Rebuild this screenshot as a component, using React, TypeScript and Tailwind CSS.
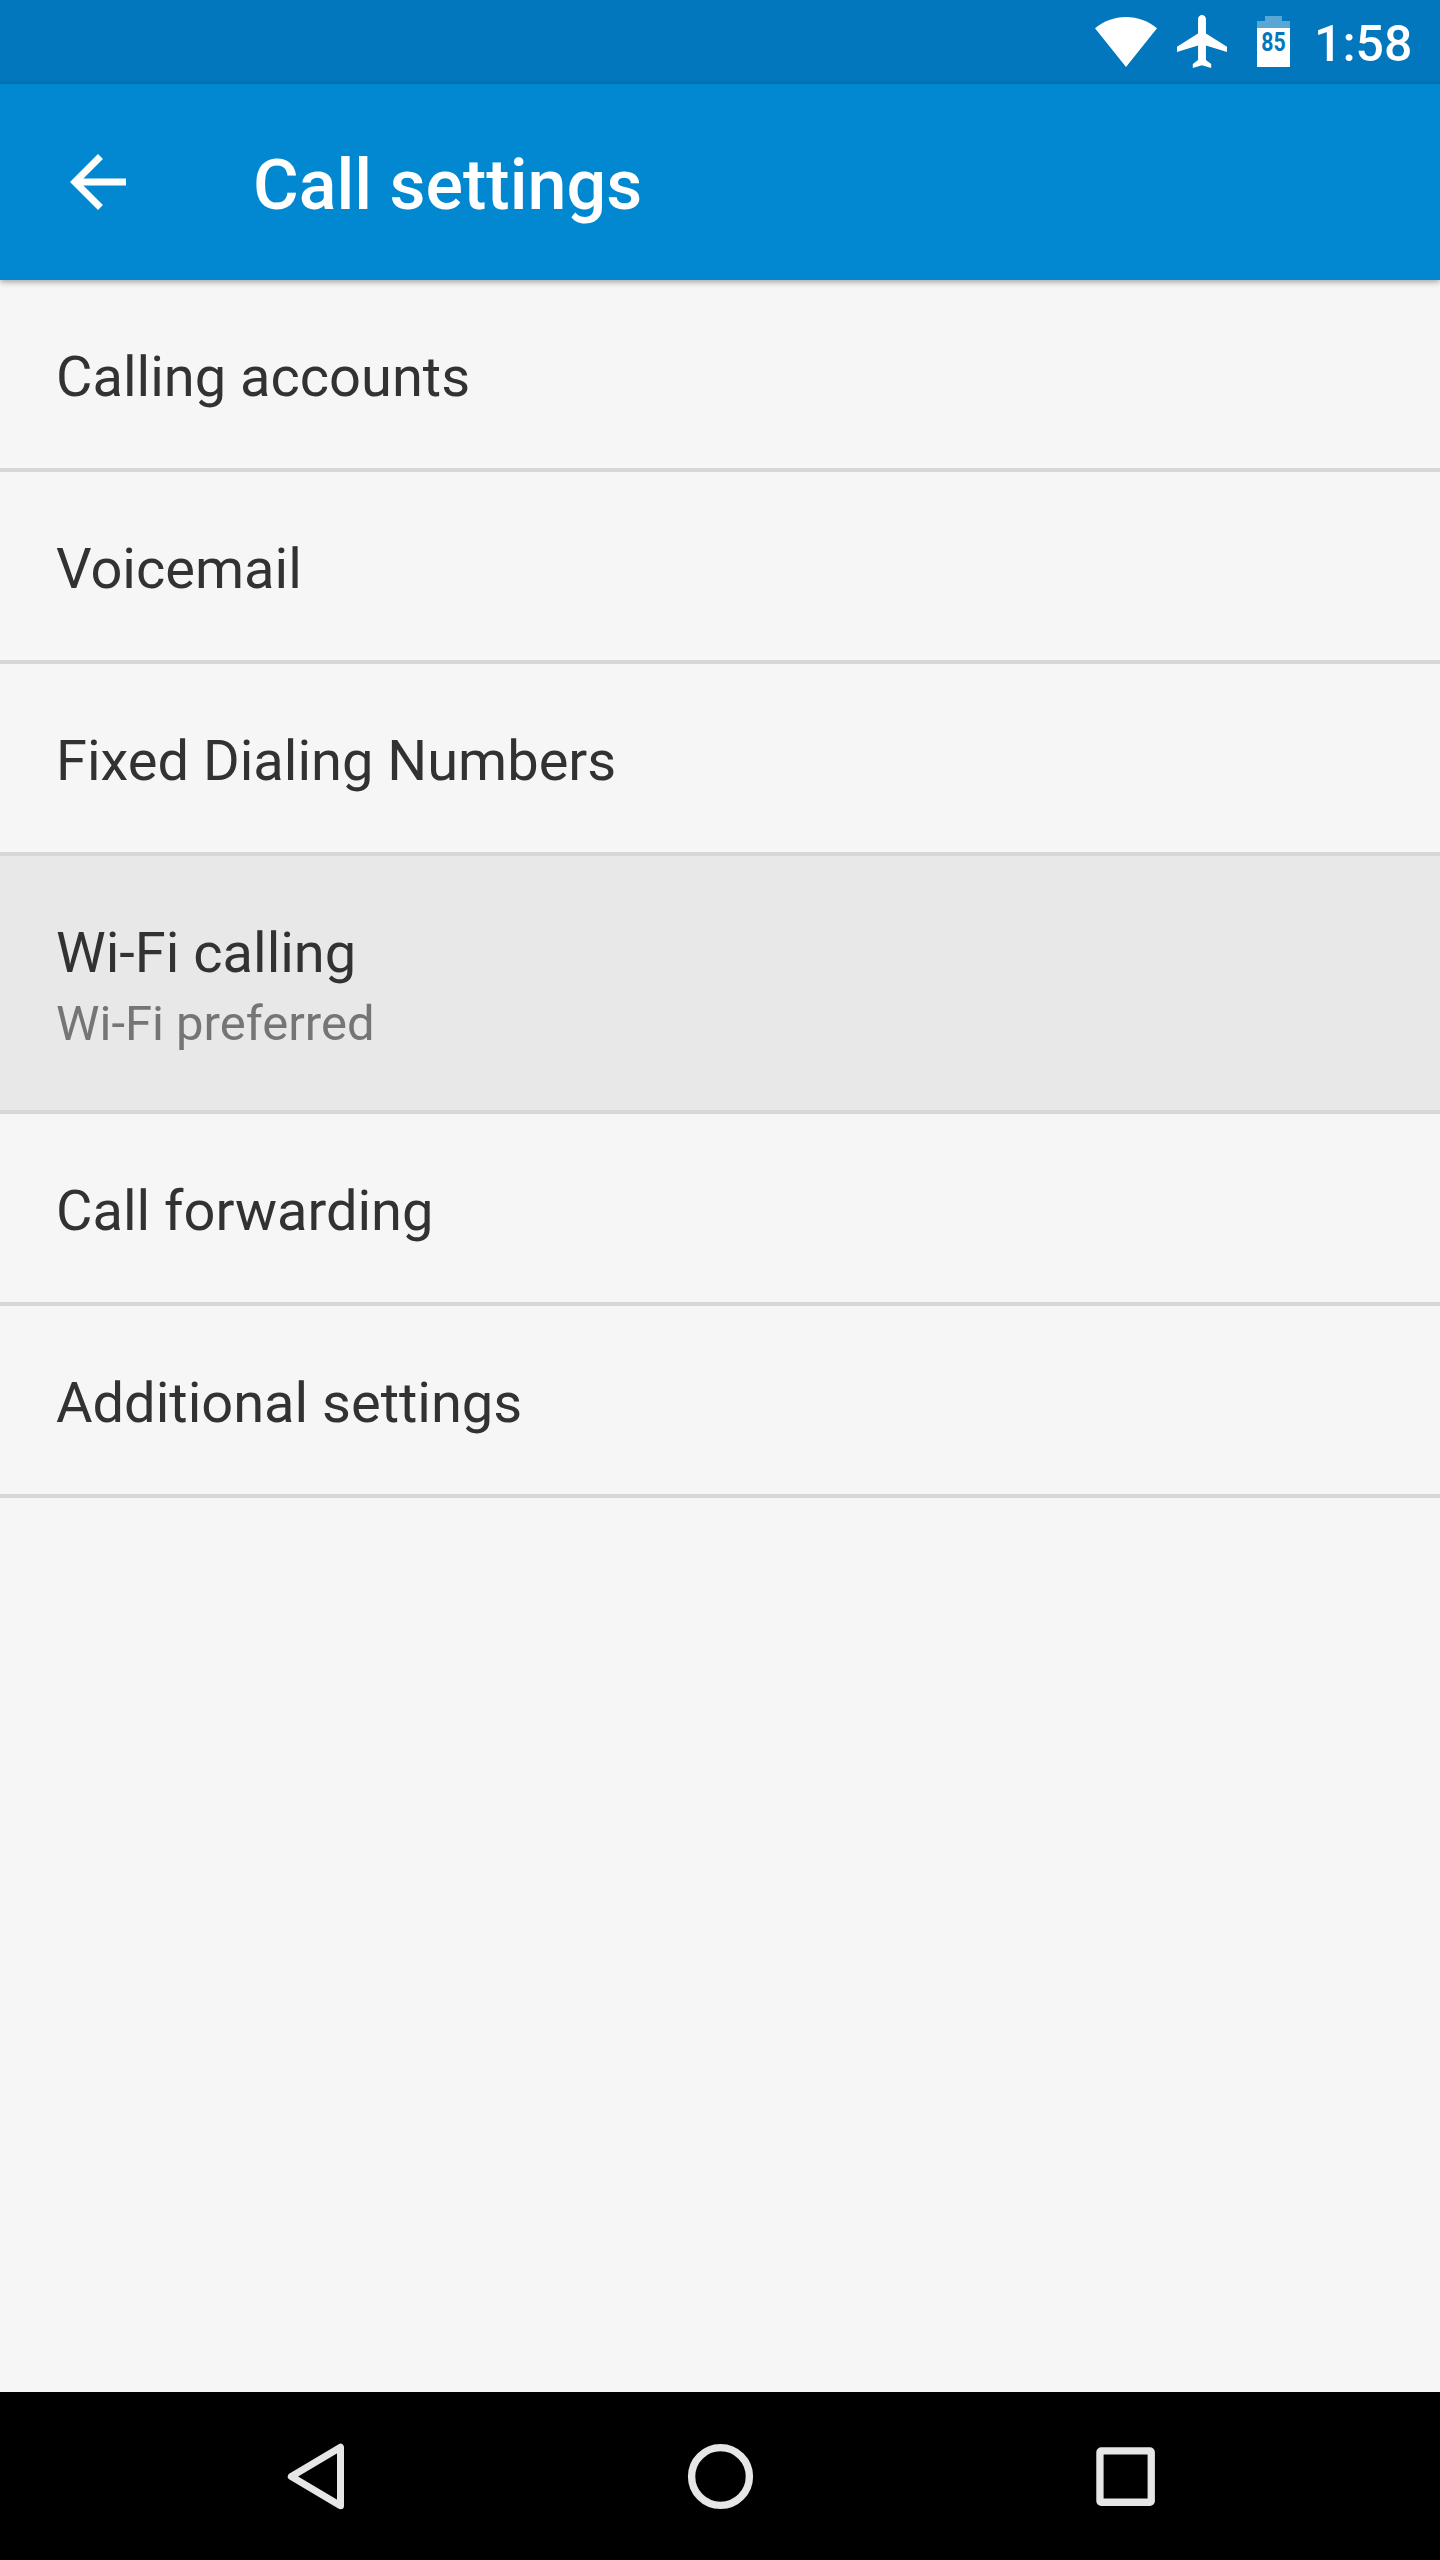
import { useState } from "react";
import { clsx } from "clsx";

type SettingItem = {
  name: string;
  summary?: string;
};

const settings: SettingItem[] = [
  { name: "Calling accounts" },
  { name: "Voicemail" },
  { name: "Fixed Dialing Numbers" },
  { name: "Wi-Fi calling", summary: "Wi-Fi preferred" },
  { name: "Call forwarding" },
  { name: "Additional settings" },
];

function WifiIcon() {
  return (
    <svg className="w-[62px] h-[50px]" viewBox="0 0 62 50" fill="currentColor">
      <path d="M31 50L0 11.2C8.6 4.2 19.2 0 31 0s22.4 4.2 31 11.2L31 50z" />
    </svg>
  );
}

function AirplaneIcon() {
  return (
    <svg className="w-[50px] h-[53px]" viewBox="2 2 19 20" preserveAspectRatio="none" fill="currentColor">
      <path d="M21 16v-2l-8-5V3.5c0-.83-.67-1.5-1.5-1.5S10 2.67 10 3.5V9l-8 5v2l8-2.5V19l-2 1.5V22l3.5-1 3.5 1v-1.5L13 19v-5.5l8 2.5z" />
    </svg>
  );
}

function BatteryIcon({ level }: { level: number }) {
  return (
    <div className="relative w-[33px] h-[51px]">
      <svg className="w-full h-full" viewBox="0 0 33 51">
        <path d="M8 0h17v5h8v7H0V5h8z" fill="#fff" fillOpacity="0.35" />
        <path d="M0 12h33v39H0z" fill="#fff" />
      </svg>
      <span className="absolute inset-x-[-10px] top-[13px] text-center text-[25px] leading-[28px] font-bold text-[#0277bd] scale-x-[0.85]">
        {level}
      </span>
    </div>
  );
}

function BackArrowIcon() {
  return (
    <svg className="w-[84px] h-[84px]" viewBox="0 0 24 24" fill="currentColor">
      <path d="M20 11H7.83l5.59-5.59L12 4l-8 8 8 8 1.41-1.41L7.83 13H20v-2z" />
    </svg>
  );
}

export default function App() {
  const [active, setActive] = useState("Wi-Fi calling");

  return (
    <div className="w-[1440px] h-[2560px] bg-[#f6f6f6] flex flex-col overflow-hidden font-['Roboto',sans-serif]">
      {/* Status bar */}
      <div className="h-[84px] shrink-0 bg-[#0277bd] text-white flex items-start justify-end pr-7">
        <div className="mt-[17px] mr-5">
          <WifiIcon />
        </div>
        <div className="mt-[15px] mr-[30px]">
          <AirplaneIcon />
        </div>
        <div className="mt-4 mr-6">
          <BatteryIcon level={85} />
        </div>
        <span className="mt-[15px] w-[98px] text-[50px] leading-[58px] font-medium">1:58</span>
      </div>

      {/* Toolbar */}
      <header className="h-[196px] shrink-0 bg-[#0288d1] text-white flex items-center pl-14 z-10 shadow-[0_2px_6px_rgba(0,0,0,0.35)]">
        <button>
          <BackArrowIcon />
        </button>
        <h1 className="ml-[113px] pt-1.5 text-[70px] leading-[82px] font-medium">Call settings</h1>
      </header>

      <main className="flex-1">
        {settings.map((item) => (
          <button
            key={item.name}
            onClick={() => setActive(item.name)}
            className={clsx(
              "block w-full px-14 pt-16 pb-[58px] text-left border-b-4 border-[#d7d7d7]",
              active === item.name && "bg-[#e8e8e8]"
            )}
          >
            <div className="text-[56px] leading-[66px] text-[#323232]">{item.name}</div>
            {item.summary && (
              <div className="pt-[9px] -mb-px text-[49px] leading-[58px] text-[#757575]">{item.summary}</div>
            )}
          </button>
        ))}
      </main>

      {/* Navigation bar */}
      <nav className="h-[168px] shrink-0 bg-black text-[#e6e6e6] flex justify-center items-center">
        <button className="w-[405px] flex justify-center">
          <svg className="w-[84px] h-[84px]" viewBox="0 0 84 84" fill="none" stroke="currentColor" strokeWidth="7" strokeLinejoin="round">
            <path d="M18.3 42.5L67.5 13.2v58.6z" />
          </svg>
        </button>
        <button className="w-[405px] flex justify-center">
          <svg className="w-[84px] h-[84px]" viewBox="0 0 84 84" fill="none" stroke="currentColor" strokeWidth="7.4">
            <circle cx="42.5" cy="42.5" r="28.9" />
          </svg>
        </button>
        <button className="w-[405px] flex justify-center">
          <svg className="w-[84px] h-[84px]" viewBox="0 0 84 84" fill="currentColor" fillRule="evenodd">
            <path d="M18.3 13.3h48.6a5 5 0 0 1 5 5v48.6a5 5 0 0 1-5 5H18.3a5 5 0 0 1-5-5V18.3a5 5 0 0 1 5-5zM20.6 20.6v44h44v-44z" />
          </svg>
        </button>
      </nav>
    </div>
  );
}
